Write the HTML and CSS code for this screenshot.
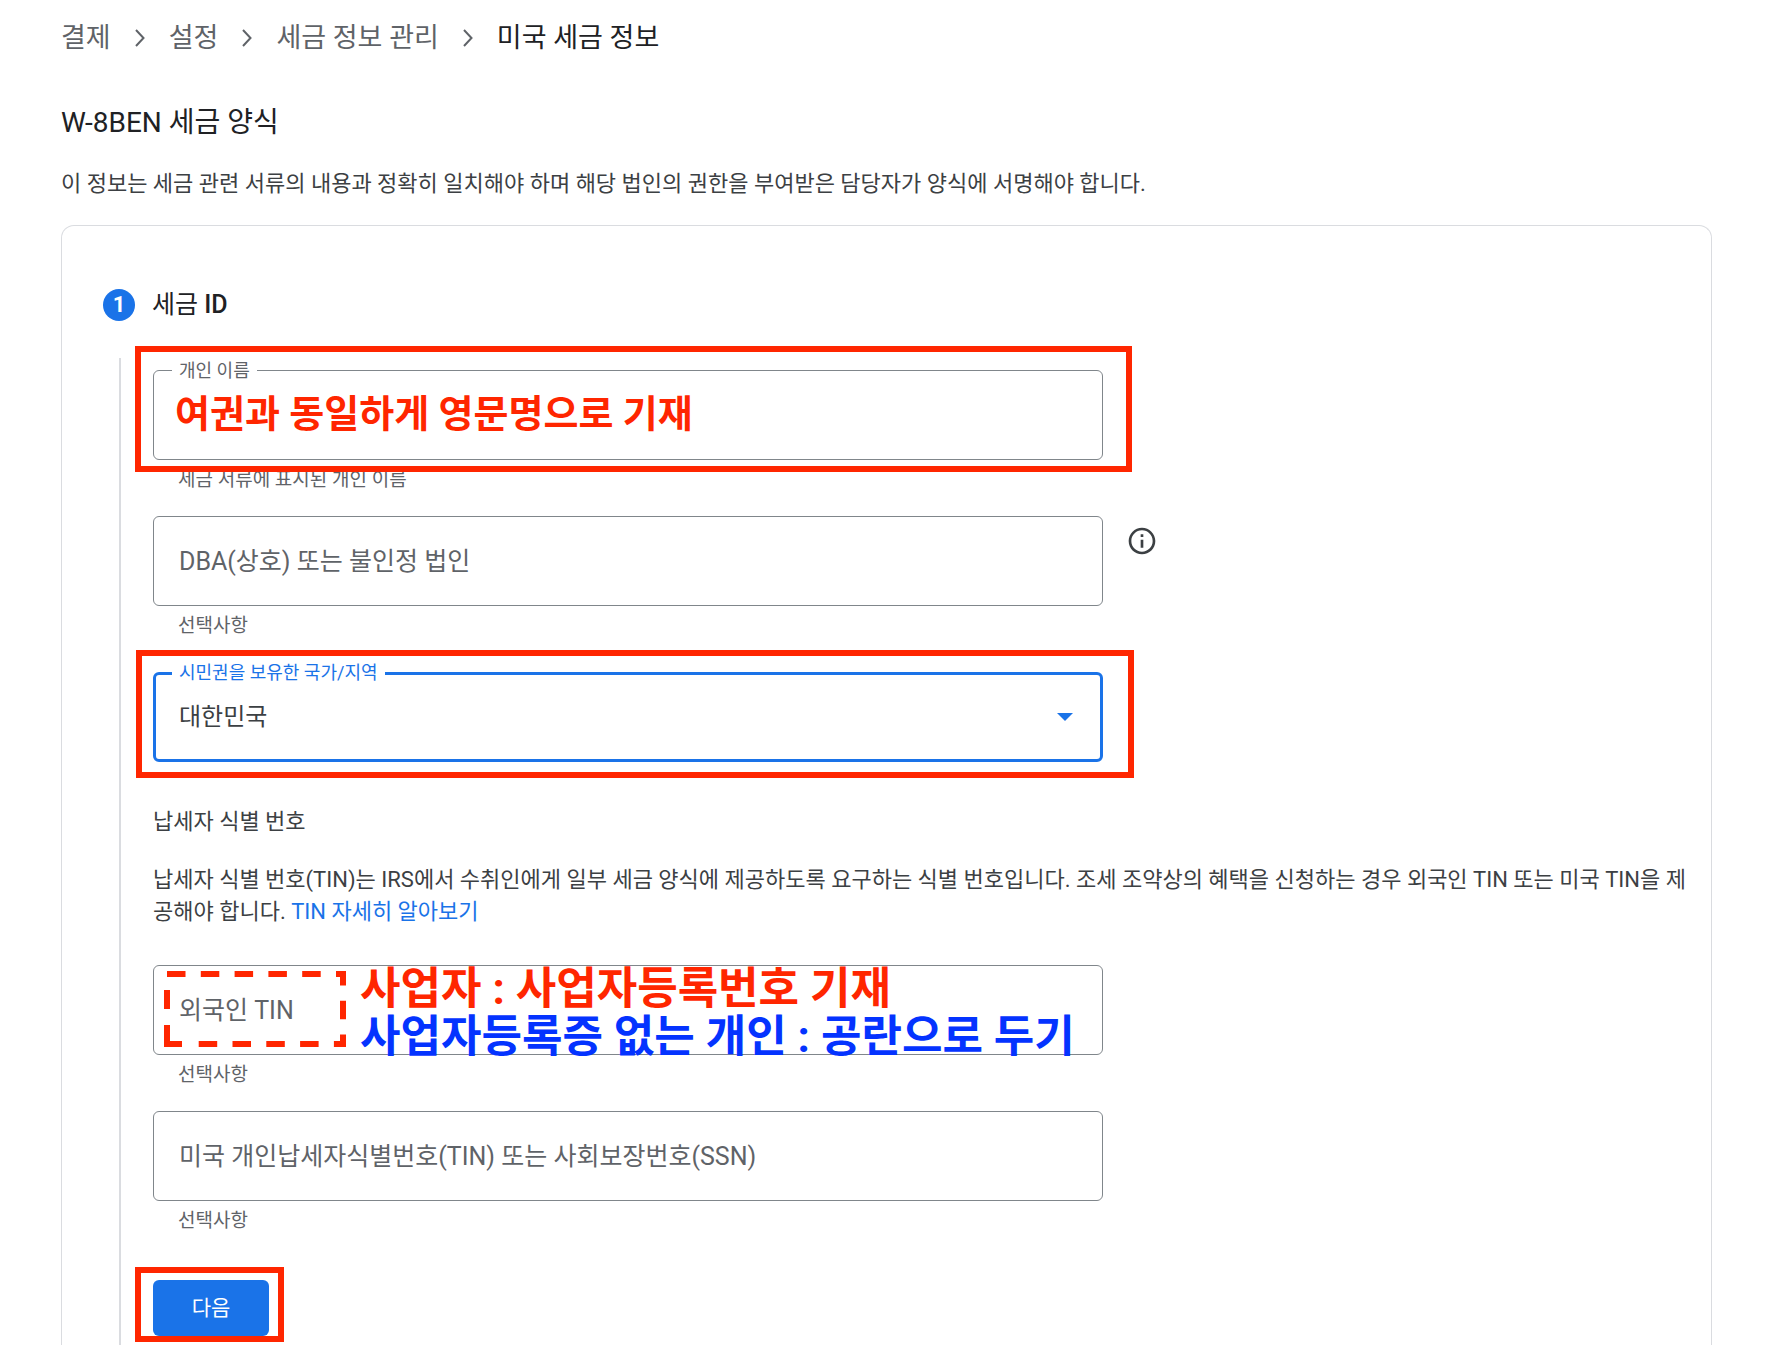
FILE: index.html
```html
<!DOCTYPE html>
<html lang="ko">
	<head>
		<meta charset="UTF-8">
		<title>미국 세금 정보</title>
		<link rel="stylesheet" href="styles.css">
	</head>
	<body>
		<nav class="breadcrumb">
			<a href="#">결제</a>
			<svg class="chevron" viewBox="0 0 10 18"><path d="M1 1l7.500 8L1 17" /></svg>
			<a href="#">설정</a>
			<svg class="chevron" viewBox="0 0 10 18"><path d="M1 1l7.500 8L1 17" /></svg>
			<a href="#">세금 정보 관리</a>
			<svg class="chevron" viewBox="0 0 10 18"><path d="M1 1l7.500 8L1 17" /></svg>
			<span class="current">미국 세금 정보</span>
		</nav>

		<h1 class="title">W-8BEN 세금 양식</h1>
		<p class="intro">이 정보는 세금 관련 서류의 내용과 정확히 일치해야 하며 해당 법인의 권한을 부여받은 담당자가 양식에 서명해야 합니다.</p>

		<main class="card">
			<div class="step-head">
				<span class="step-num">1</span>
				<h2 class="step-title">세금 <b>ID</b></h2>
			</div>

			<form class="step-body">
				<div class="group">
					<div class="field">
						<input class="box" type="text" id="name">
						<label class="float-label" for="name">개인 이름</label>
						<div class="mark mark-name"></div>
						<p class="note note-name">여권과 동일하게 영문명으로 기재</p>
					</div>
					<p class="helper">세금 서류에 표시된 개인 이름</p>
				</div>

				<div class="group">
					<div class="row">
						<div class="field">
							<input class="box" type="text" aria-label="DBA(상호) 또는 불인정 법인" placeholder="DBA(상호) 또는 불인정 법인">
						</div>
						<button class="info" type="button" aria-label="정보">
							<svg viewBox="0 0 24 24"><path d="M11 7h2v2h-2zm0 4h2v6h-2zm1-9C6.480 2 2 6.480 2 12s4.480 10 10 10 10-4.480 10-10S17.520 2 12 2zm0 18c-4.410 0-8-3.590-8-8s3.590-8 8-8 8 3.590 8 8-3.590 8-8 8z" /></svg>
						</button>
					</div>
					<p class="helper">선택사항</p>
				</div>

				<div class="group country">
					<div class="field">
						<select class="box active" id="country">
							<option>대한민국</option>
						</select>
						<label class="float-label active-label" for="country">시민권을 보유한 국가/지역</label>
						<svg class="arrow" viewBox="0 0 16 8"><path d="M0 0h16L8 8z" /></svg>
						<div class="mark mark-country"></div>
					</div>
				</div>

				<h3 class="tin-title">납세자 식별 번호</h3>
				<p class="tin-text">납세자 식별 번호(TIN)는 IRS에서 수취인에게 일부 세금 양식에 제공하도록 요구하는 식별 번호입니다. 조세 조약상의 혜택을 신청하는 경우 외국인 TIN 또는 미국 TIN을 제공해야 합니다. <a href="#">TIN 자세히 알아보기</a></p>

				<div class="group">
					<div class="field">
						<input class="box" type="text" aria-label="외국인 TIN" placeholder="외국인 TIN">
						<svg class="dashes" viewBox="0 0 182 76">
							<path stroke-dasharray="18.500 15.300" d="M3 3H179V73H22" />
							<path d="M3 19V38M3 54V73H18" />
						</svg>
						<div class="note note-tin">
							<p>사업자 : 사업자등록번호 기재</p>
							<p class="blue">사업자등록증 없는 개인 : 공란으로 두기</p>
						</div>
					</div>
					<p class="helper">선택사항</p>
				</div>

				<div class="group">
					<div class="field">
						<input class="box" type="text" aria-label="미국 개인납세자식별번호(TIN) 또는 사회보장번호(SSN)" placeholder="미국 개인납세자식별번호(TIN) 또는 사회보장번호(SSN)">
					</div>
					<p class="helper">선택사항</p>
				</div>

				<div class="actions">
					<button class="next" type="button">다음</button>
					<div class="mark mark-next"></div>
				</div>
			</form>
		</main>
	</body>
</html>
```

FILE: styles.css
```css
* {
	box-sizing: border-box;
}

body {
	display: flex;
	flex-direction: column;
	min-height: 100vh;
	margin: 0;
	padding: 0 54px 0 61px;
	background: #fff;
	color: #3c4043;
	font-family: Roboto, "Noto Sans CJK KR", sans-serif;
	font-size: 22px;
	line-height: 32px;
}

h1, h2, h3, p {
	margin: 0;
	font-weight: 400;
}

a {
	color: #1a73e8;
	text-decoration: none;
}

input, select, button {
	font-family: inherit;
}

/* breadcrumb */
.breadcrumb {
	display: flex;
	align-items: center;
	gap: 24px;
	padding-top: 22px;
	font-size: 27px;
}

.breadcrumb a {
	color: #5f6368;
}

.breadcrumb .current {
	color: #202124;
}

.chevron {
	width: 10px;
	height: 18px;
	fill: none;
	stroke: #5f6368;
	stroke-width: 2;
}

.title {
	margin-top: 53px;
	color: #202124;
	font-size: 28px;
}

.intro {
	margin: 29px 0 25px;
}

/* card and step */
.card {
	flex: 1;
	border: 1px solid #dadce0;
	border-bottom: 0;
	border-radius: 13px 13px 0 0;
	display: flex;
	flex-direction: column;
}

.step-head {
	display: flex;
	align-items: center;
	gap: 17px;
	padding: 63px 0 37px 41px;
}

.step-num {
	width: 32px;
	height: 32px;
	border-radius: 50%;
	background: #1a73e8;
	color: #fff;
	font-weight: 700;
	text-align: center;
}

.step-title {
	color: #202124;
	font-size: 25px;
}

.step-title b {
	font-weight: 500;
}

.step-body {
	flex: 1;
	margin-left: 57px;
	padding: 12px 16px 0 32px;
	border-left: 2px solid #dadce0;
}

/* fields */
.group {
	margin-bottom: 24px;
}

.row {
	display: flex;
	gap: 23px;
}

.field {
	position: relative;
	flex: 1;
	max-width: 950px;
}

.box {
	display: block;
	width: 100%;
	height: 90px;
	padding: 0 25px;
	border: 1px solid #80868b;
	border-radius: 6px;
	background: #fff;
	color: #3c4043;
	font-size: 25px;
	appearance: none;
}

.box::placeholder {
	color: #5f6368;
	opacity: 1;
}

.box.active {
	padding: 0 23px;
	border: 3px solid #1a73e8;
	font-size: 24px;
}

.float-label {
	position: absolute;
	top: -11px;
	left: 19px;
	padding: 0 7px;
	background: #fff;
	color: #5f6368;
	font-size: 18px;
	line-height: 24px;
}

.active-label {
	color: #1a73e8;
}

.helper {
	margin: 8px 0 0 25px;
	color: #5f6368;
	font-size: 19px;
	line-height: 24px;
}

.arrow {
	position: absolute;
	top: 41px;
	right: 30px;
	width: 16px;
	height: 8px;
	fill: #1a73e8;
	pointer-events: none;
}

.info {
	width: 32px;
	height: 32px;
	margin: 9px 0 0;
	padding: 0;
	border: 0;
	background: none;
}

.info svg {
	display: block;
	fill: #3c4043;
}

.country {
	margin: 34px 0 44px;
}

.tin-title {
	font-size: 22px;
}

.tin-text {
	margin: 26px 0 37px;
	word-break: break-all;
}

.actions {
	position: relative;
	width: 116px;
	margin-top: 47px;
}

.next {
	display: block;
	width: 100%;
	height: 56px;
	padding: 0 0 4px;
	border: 0;
	border-radius: 6px;
	background: #1a73e8;
	color: #fff;
	font-size: 21px;
}

/* annotations drawn over the form */
.mark {
	position: absolute;
	border: 6px solid #ff2600;
	pointer-events: none;
}

.mark-name {
	top: -24px;
	right: -29px;
	bottom: -12px;
	left: -18px;
}

.mark-country {
	top: -22px;
	right: -31px;
	bottom: -16px;
	left: -17px;
}

.mark-next {
	top: -13px;
	right: -15px;
	bottom: -6px;
	left: -18px;
}

.note {
	position: absolute;
	color: #ff2600;
	font-weight: 700;
	white-space: nowrap;
	pointer-events: none;
}

.note p {
	font-weight: 700;
}

.note-name {
	top: 20px;
	left: 22px;
	font-size: 38px;
	line-height: 48px;
}

.note-tin {
	top: 0;
	left: 207px;
	font-size: 44px;
	line-height: 48px;
}

.blue {
	color: #0433ff;
}

.dashes {
	position: absolute;
	top: 6px;
	left: 11px;
	width: 182px;
	height: 76px;
	fill: none;
	stroke: #ff2600;
	stroke-width: 6;
	pointer-events: none;
}
```
